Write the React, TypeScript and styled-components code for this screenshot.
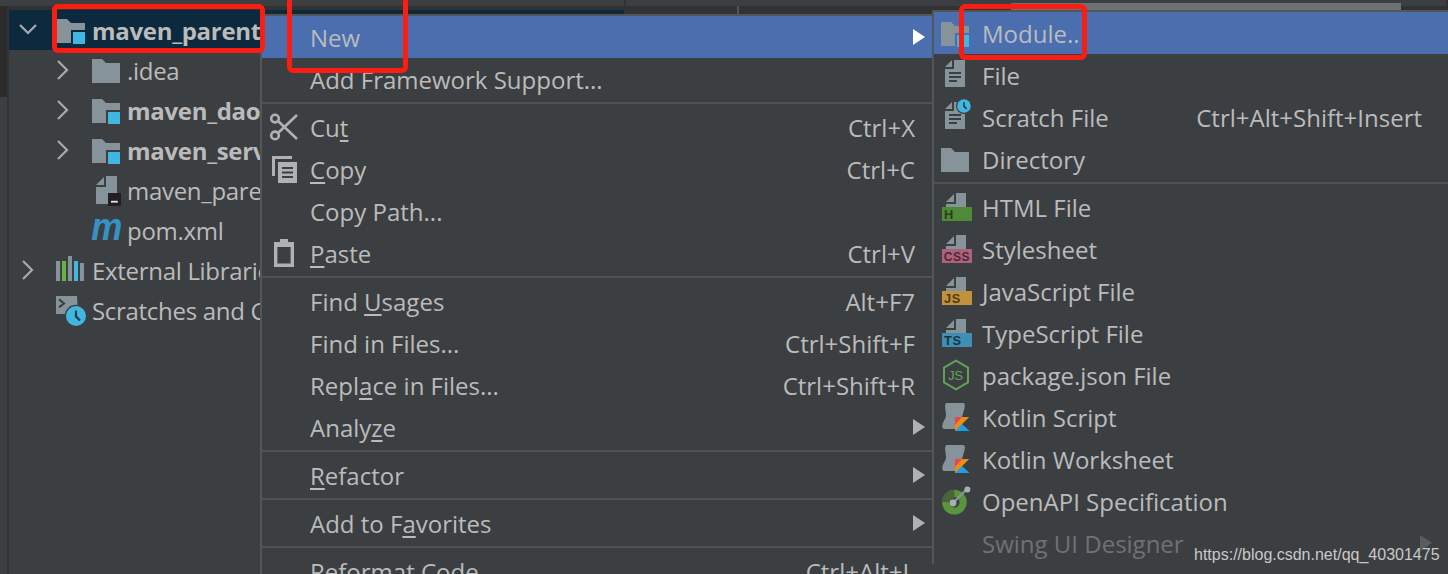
import React from "react";
import styled, { createGlobalStyle } from "styled-components";

const Global = createGlobalStyle`
  html, body { margin: 0; padding: 0; background: #3c3f41; }
  * { box-sizing: border-box; }
`;

const FONT = `"Open Sans", "Noto Sans", "Liberation Sans", sans-serif`;
const GRAY = "#87939a";
const BLUE = "#40b6e0";

const Frame = styled.div`
  position: relative;
  width: 1448px;
  height: 574px;
  overflow: hidden;
  background: #3c3f41;
  font-family: ${FONT};
  font-size: 24px;
  color: #bbbbbb;
`;
const TopStrip = styled.div`
  height: 6px;
  background: #3c3f41;
  display: flex;
`;
const TopTab = styled.div<{ $w?: number }>`
  ${(p) => (p.$w ? `width: ${p.$w}px;` : "flex: 1;")}
  border-right: 2px solid #323232;
`;
const Scroll = styled.div`
  position: absolute;
  left: 1011px;
  top: 3px;
  width: 390px;
  height: 10px;
  background: #6e7073;
`;
const Body = styled.div`
  display: flex;
  height: 568px;
`;
const SideStrip = styled.div`
  width: 9px;
  flex: none;
  border-right: 2px solid #313335;
  background: linear-gradient(#2b2b2b 0 91px, #3c3f41 91px);
`;
const TreePanel = styled.div`
  width: 617px;
  flex: none;
  border-top: 4px solid #323232;
  border-right: 2px solid #323232;
`;
const Editor = styled.div`
  flex: 1;
  height: 8px;
  background: #323232;
  display: flex;
`;
const EditorGutter = styled.div`
  width: 113px;
  border-right: 2px solid #555;
`;
const TreeRow = styled.div<{ $depth: number; $selected?: boolean }>`
  display: flex;
  align-items: center;
  height: 40px;
  padding-left: ${(p) => 3 + p.$depth * 35}px;
  background: ${(p) => (p.$selected ? "#0d293e" : "transparent")};
  white-space: nowrap;
  overflow: hidden;
  width: 251px;
  ${(p) => p.$selected && "width: 100%;"}
`;
const Twist = styled.span`
  width: 32px;
  height: 32px;
  flex: none;
  margin-right: 12px;
  display: flex;
  align-items: center;
  justify-content: center;
`;
const TreeIcon = styled.span`
  width: 32px;
  height: 32px;
  flex: none;
  margin-right: 4px;
  display: flex;
  align-items: center;
  justify-content: center;
`;
const TreeLabel = styled.span<{ $bold?: boolean }>`
  font-weight: ${(p) => (p.$bold ? 700 : 400)};
  letter-spacing: -0.3px;
`;
const MavenMark = styled.span`
  font-family: "Liberation Sans", sans-serif;
  font-weight: 700;
  font-style: italic;
  font-size: 38px;
  line-height: 32px;
  color: #3592c4;
  transform: translateY(-3px) scaleX(0.92);
`;
const Menu = styled.div<{ $left: number; $top: number; $width: number; $pr: number }>`
  position: absolute;
  left: ${(p) => p.$left}px;
  top: ${(p) => p.$top}px;
  width: ${(p) => p.$width}px;
  --pr: ${(p) => p.$pr}px;
  background: #3c3f41;
  border-top: 2px solid #515658;
  border-left: 2px solid #515658;
`;
const Row = styled.div<{ $active?: boolean; $disabled?: boolean }>`
  position: relative;
  display: flex;
  align-items: center;
  height: 42px;
  padding-left: 48px;
  padding-right: var(--pr);
  white-space: nowrap;
  background: ${(p) => (p.$active ? "#4b6eaf" : "transparent")};
  color: ${(p) => (p.$disabled ? "#6f7173" : "#bbbbbb")};
`;
const RowIcon = styled.span`
  position: absolute;
  left: 6px;
  top: 5px;
  width: 32px;
  height: 32px;
  display: flex;
  align-items: center;
  justify-content: center;
`;
const Shortcut = styled.span`
  margin-left: auto;
`;
const Arrow = styled.span<{ $color: string }>`
  position: absolute;
  right: calc(var(--pr) - 10px);
  top: 13px;
  width: 0;
  height: 0;
  border-top: 8px solid transparent;
  border-bottom: 8px solid transparent;
  border-left: 12px solid ${(p) => p.$color};
`;
const Sep = styled.div`
  height: 6px;
  display: flex;
  align-items: center;
  &::after {
    content: "";
    display: block;
    width: 100%;
    height: 2px;
    background: #515151;
  }
`;
const Mn = styled.span`
  text-decoration: underline;
  text-underline-offset: 3px;
  text-decoration-thickness: 2px;
`;
const RedBox = styled.div<{ $l: number; $t: number; $w: number; $h: number }>`
  position: absolute;
  left: ${(p) => p.$l}px;
  top: ${(p) => p.$t}px;
  width: ${(p) => p.$w}px;
  height: ${(p) => p.$h}px;
  border: 5px solid #fb1d11;
  border-radius: 6px;
`;
const Watermark = styled.div`
  position: absolute;
  left: 1194px;
  top: 545px;
  font-family: "Liberation Sans", Arial, sans-serif;
  font-size: 16px;
  line-height: 20px;
  color: #c9c9c9;
  white-space: nowrap;
`;

const Ic: React.FC<{ children: React.ReactNode; vb?: string; w?: number; h?: number }> = ({ children, vb = "0 0 16 16", w = 32, h = 32 }) => (
  <svg width={w} height={h} viewBox={vb} style={{ display: "block", overflow: "visible" }}>{children}</svg>
);

const Chevron = ({ down }: { down?: boolean }) => (
  <svg width="32" height="32" viewBox="0 0 32 32">
    <path d={down ? "M8 11l8 8 8-8" : "M11 7l9 9-9 9"} transform={down ? "" : "translate(0 0)"} fill="none" stroke="#a8abad" strokeWidth="2.2" />
  </svg>
);

const FOLDER = "M.5 2.5h5l2 2h7v10H.5z";
const Folder = () => <Ic><path d={FOLDER} fill={GRAY} /></Ic>;
const ModuleFolder = ({ bg = "#3c3f41" }: { bg?: string }) => (
  <Ic>
    <path d={FOLDER} fill={GRAY} />
    <rect x="7.5" y="8" width="8" height="8" fill={bg} />
    <rect x="8.5" y="9" width="6" height="6" fill={BLUE} />
  </Ic>
);
const FILE = "M12.5 .5v13.5h-10V4.5h4v-4z";
const FileSheet = ({ lines = true }: { lines?: boolean }) => (
  <>
    <path d="M6 .5v3.5H2.5z" fill={GRAY} />
    <path d="M7 .5h5.5v13.5h-10V5H7z" fill={GRAY} />
    {lines && <path d="M4.5 7h6M4.5 9h6M4.5 11h4" stroke="#3c3f41" strokeWidth="1" fill="none" />}
  </>
);
const FileIcon = () => <Ic><FileSheet /></Ic>;
const Clock = ({ cx, cy, r }: { cx: number; cy: number; r: number }) => (
  <>
    <circle cx={cx} cy={cy} r={r + 0.6} fill="#3c3f41" />
    <circle cx={cx} cy={cy} r={r} fill={BLUE} />
    <path d={`M${cx} ${cy - r * 0.55}v${r * 0.6}l${r * 0.4} ${r * 0.4}`} stroke="#1d3a4a" strokeWidth={r * 0.22} fill="none" />
  </>
);
const ScratchFile = () => (
  <Ic>
    <FileSheet />
    <Clock cx={12} cy={2.5} r={3.4} />
  </Ic>
);
const ImlFile = () => (
  <Ic>
    <path d="M6.5 1.5v4h-4z" fill={GRAY} />
    <path d="M7.5 1h5.5v14H2.5V6.5h5z" fill={GRAY} />
    <rect x="8.5" y="9.5" width="6.5" height="6.5" fill="#231f20" />
    <rect x="10" y="13.4" width="3.4" height="0.9" fill="#e8e8e8" />
  </Ic>
);
const Banner = ({ color, ink, text, size = 6.4 }: { color: string; ink: string; text: string; size?: number }) => (
  <Ic>
    <path d="M7 1.5v4H3z" fill={GRAY} />
    <path d="M8 1h5v7H3V6.5h5z" fill={GRAY} />
    <rect x="1" y="8" width="15" height="7" fill={color} />
    <text x="8.5" y="14" textAnchor={text.length > 2 ? "middle" : undefined} dx={text.length > 2 ? 0 : -6.5} fontFamily="Liberation Sans, sans-serif" fontWeight="700" fontSize={size} letterSpacing="0.3" fill={ink}>{text}</text>
  </Ic>
);
const NodeIcon = () => (
  <Ic>
    <path d="M8 .8l6 3.5v7.4l-6 3.5-6-3.5V4.3z" fill="none" stroke="#62a15a" strokeWidth="1" />
    <text x="4" y="10.6" fontFamily="Liberation Sans, sans-serif" fontSize="6.6" letterSpacing="-0.2" fill="#62a15a">JS</text>
  </Ic>
);
const KotlinIcon = () => (
  <Ic>
    <path d="M3 1h8.5c1 0 1 1.2.8 2.5L11 8H9l-.5 6H2.5C1.2 14 1 13 1.3 11.5 1.8 9.5 3 9 3 7 3 4.5 2 3 3 1z" fill={GRAY} />
    <path d="M7.5 8h7L11 11.5l3.8 3.5H7.5z" fill="#1d9fe8" />
    <path d="M7.5 8h3.5L7.5 12z" fill="#e44857" />
    <path d="M11 8h3.5l-7 7v-3z" fill="#f88909" />
  </Ic>
);
const OpenApi = () => (
  <Ic>
    <circle cx="7.2" cy="8.6" r="4.4" fill="none" stroke="#57963c" strokeWidth="3.6" />
    <path d="M7.2 2.4A6.2 6.2 0 0 0 1 8.6l6.2 0z" fill="#4a5d3a" opacity=".9" />
    <path d="M6.5 9L13.5 2" stroke={GRAY} strokeWidth="1.2" />
    <circle cx="6.5" cy="9" r="1.7" fill="#a8b0b5" />
    <circle cx="13.7" cy="2.2" r="1.5" fill="#a8b0b5" />
  </Ic>
);
const ScissorsIcon = () => (
  <Ic>
    <g fill="none" stroke="#afb1b3" strokeWidth="1.3">
      <circle cx="3.5" cy="3.8" r="1.9" />
      <circle cx="3.5" cy="12.2" r="1.9" />
      <path d="M5 5L14.5 14M5 11L14.5 2" />
    </g>
  </Ic>
);
const CopyIcon = () => (
  <Ic>
    <path d="M2 1.5h10v1.5H3.5v8.5H2z" fill="#afb1b3" />
    <path d="M5 4.5h9.5v10.5H5z" fill="#afb1b3" />
    <path d="M7 7.5h5.5M7 9.7h5.5M7 12h5.5" stroke="#3c3f41" strokeWidth="1" />
  </Ic>
);
const PasteIcon = () => (
  <Ic>
    <path d="M3 2.5h3V1h4v1.5h3V15H3z M4.7 5v8.3h6.6V5z" fillRule="evenodd" fill="#afb1b3" />
  </Ic>
);
const LibrariesIcon = () => (
  <Ic>
    <rect x="0" y="3.5" width="2" height="10" fill={GRAY} />
    <rect x="3" y="3.5" width="2" height="10" fill="#62b543" />
    <rect x="6" y="1" width="2" height="12.5" fill={GRAY} />
    <rect x="9" y="3.5" width="2" height="10" fill={BLUE} />
    <rect x="12" y="4.5" width="2" height="9" fill={GRAY} />
  </Ic>
);
const ScratchesIcon = () => (
  <Ic>
    <path d="M0 1h10.5l.5 9H0z" fill={GRAY} />
    <path d="M1.5 2.7L4 4.7 1.5 6.7" fill="none" stroke="#3c3f41" strokeWidth="1" />
    <Clock cx={10} cy={11} r={5} />
  </Ic>
);

type Item = {
  label: React.ReactNode;
  key: string;
  shortcut?: string;
  arrow?: boolean;
  icon?: React.ReactNode;
  active?: boolean;
  disabled?: boolean;
  sep?: boolean;
};

const mainItems: Item[] = [
  { key: "new", label: "New", arrow: true, active: true },
  { key: "fw", label: "Add Framework Support..." },
  { key: "s1", label: "", sep: true },
  { key: "cut", label: <>Cu<Mn>t</Mn></>, shortcut: "Ctrl+X", icon: <ScissorsIcon /> },
  { key: "copy", label: <><Mn>C</Mn>opy</>, shortcut: "Ctrl+C", icon: <CopyIcon /> },
  { key: "path", label: "Copy Path..." },
  { key: "paste", label: <><Mn>P</Mn>aste</>, shortcut: "Ctrl+V", icon: <PasteIcon /> },
  { key: "s2", label: "", sep: true },
  { key: "usages", label: <>Find <Mn>U</Mn>sages</>, shortcut: "Alt+F7" },
  { key: "fif", label: "Find in Files...", shortcut: "Ctrl+Shift+F" },
  { key: "rif", label: <>Repl<Mn>a</Mn>ce in Files...</>, shortcut: "Ctrl+Shift+R" },
  { key: "an", label: <>Analy<Mn>z</Mn>e</>, arrow: true },
  { key: "s3", label: "", sep: true },
  { key: "ref", label: <><Mn>R</Mn>efactor</>, arrow: true },
  { key: "s4", label: "", sep: true },
  { key: "fav", label: <>Add to F<Mn>a</Mn>vorites</>, arrow: true },
  { key: "s5", label: "", sep: true },
  { key: "fmt", label: "Reformat Code", shortcut: "Ctrl+Alt+L" },
];

const subItems: Item[] = [
  { key: "mod", label: "Module..", active: true, icon: <ModuleFolder bg="#4b6eaf" /> },
  { key: "file", label: "File", icon: <FileIcon /> },
  { key: "scr", label: "Scratch File", shortcut: "Ctrl+Alt+Shift+Insert", icon: <ScratchFile /> },
  { key: "dir", label: "Directory", icon: <Folder /> },
  { key: "s1", label: "", sep: true },
  { key: "html", label: "HTML File", icon: <Banner color="#4f8a37" ink="#27401c" text="H" /> },
  { key: "css", label: "Stylesheet", icon: <Banner color="#b0607b" ink="#4a2a36" text="CSS" size={6} /> },
  { key: "js", label: "JavaScript File", icon: <Banner color="#c1923a" ink="#4b3a18" text="JS" /> },
  { key: "ts", label: "TypeScript File", icon: <Banner color="#3f8fb4" ink="#173645" text="TS" /> },
  { key: "pkg", label: "package.json File", icon: <NodeIcon /> },
  { key: "ks", label: "Kotlin Script", icon: <KotlinIcon /> },
  { key: "kw", label: "Kotlin Worksheet", icon: <KotlinIcon /> },
  { key: "oa", label: "OpenAPI Specification", icon: <OpenApi /> },
  { key: "sw", label: "Swing UI Designer", disabled: true, arrow: true },
];

const MenuList = ({ items, left, top, width, pr }: { items: Item[]; left: number; top: number; width: number; pr: number }) => (
  <Menu $left={left} $top={top} $width={width} $pr={pr}>
    {items.map((it) =>
      it.sep ? (
        <Sep key={it.key} />
      ) : (
        <Row key={it.key} $active={it.active} $disabled={it.disabled}>
          {it.icon && <RowIcon>{it.icon}</RowIcon>}
          <span>{it.label}</span>
          {it.shortcut && <Shortcut>{it.shortcut}</Shortcut>}
          {it.arrow && <Arrow $color={it.active ? "#ffffff" : it.disabled ? "#5a5c5e" : "#afb1b3"} />}
        </Row>
      )
    )}
  </Menu>
);

const treeRows = [
  { key: "root", depth: 0, open: true, twist: true, bold: true, selected: true, icon: <ModuleFolder bg="#0d293e" />, label: "maven_parent" },
  { key: "idea", depth: 1, twist: true, icon: <Folder />, label: ".idea" },
  { key: "dao", depth: 1, twist: true, bold: true, icon: <ModuleFolder />, label: "maven_dao" },
  { key: "srv", depth: 1, twist: true, bold: true, icon: <ModuleFolder />, label: "maven_service" },
  { key: "iml", depth: 1, icon: <ImlFile />, label: "maven_parent.iml" },
  { key: "pom", depth: 1, icon: <MavenMark>m</MavenMark>, label: "pom.xml" },
  { key: "ext", depth: 0, twist: true, icon: <LibrariesIcon />, label: "External Libraries" },
  { key: "scr", depth: 0, icon: <ScratchesIcon />, label: "Scratches and Consoles" },
];

export default function App() {
  return (
    <Frame>
      <Global />
      <TopStrip>
        <TopTab $w={626} />
        <TopTab />
      </TopStrip>
      <Scroll />
      <Body>
        <SideStrip />
        <TreePanel>
          {treeRows.map((r) => (
            <TreeRow key={r.key} $depth={r.depth} $selected={r.selected}>
              <Twist>{r.twist && <Chevron down={r.open} />}</Twist>
              <TreeIcon>{r.icon}</TreeIcon>
              <TreeLabel $bold={r.bold}>{r.label}</TreeLabel>
            </TreeRow>
          ))}
        </TreePanel>
        <Editor>
          <EditorGutter />
        </Editor>
      </Body>
      <MenuList items={mainItems} left={260} top={14} width={672} pr={17} />
      <MenuList items={subItems} left={932} top={10} width={516} pr={26} />
      <RedBox $l={52} $t={4} $w={213} $h={49} />
      <RedBox $l={287} $t={-10} $w={121} $h={83} />
      <RedBox $l={959} $t={4} $w={128} $h={56} />
      <Watermark>https://blog.csdn.net/qq_40301475</Watermark>
    </Frame>
  );
}
